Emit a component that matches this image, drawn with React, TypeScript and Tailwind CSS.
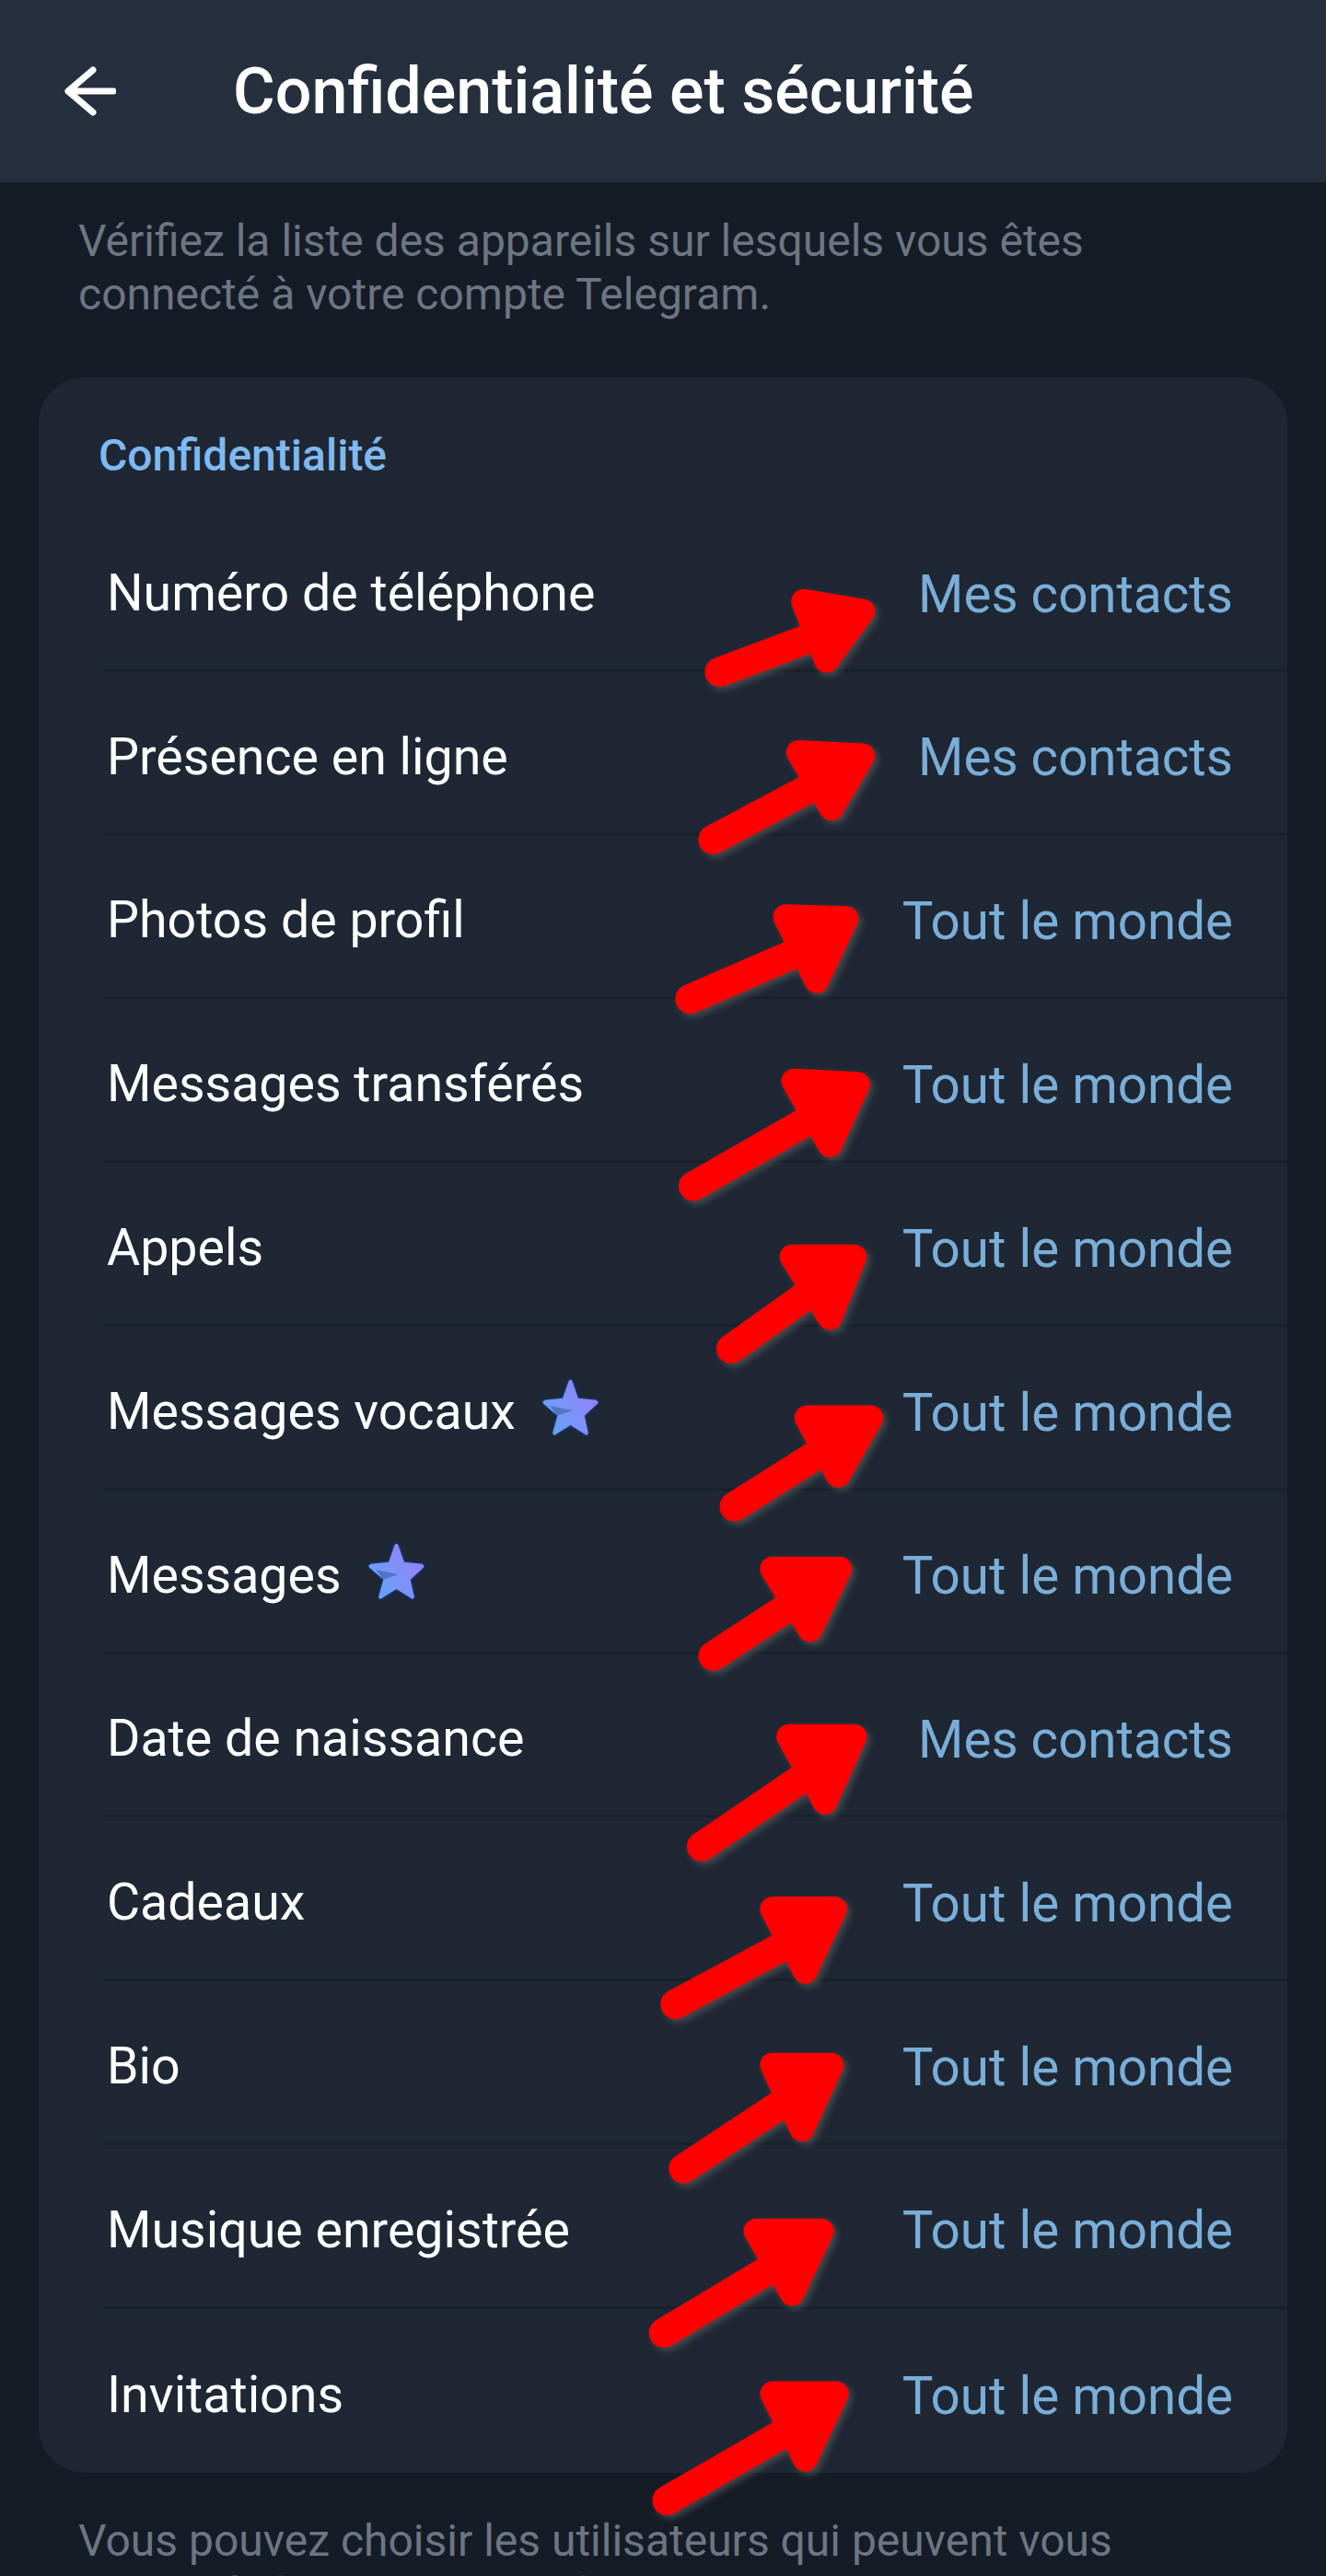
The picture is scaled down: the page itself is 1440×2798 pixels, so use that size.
import {ReactNode} from "react";

const rows = [
  {label: "Numéro de téléphone", value: "Mes contacts"},
  {label: "Présence en ligne", value: "Mes contacts"},
  {label: "Photos de profil", value: "Tout le monde"},
  {label: "Messages transférés", value: "Tout le monde"},
  {label: "Appels", value: "Tout le monde"},
  {label: "Messages vocaux", value: "Tout le monde", star: true},
  {label: "Messages", value: "Tout le monde", star: true},
  {label: "Date de naissance", value: "Mes contacts"},
  {label: "Cadeaux", value: "Tout le monde"},
  {label: "Bio", value: "Tout le monde"},
  {label: "Musique enregistrée", value: "Tout le monde"},
  {label: "Invitations", value: "Tout le monde"},
];

// tail, then the 3 corners of the head, in 807x1568 coords
const arrows = [
  [438, 409, 489, 366, 525, 372, 503, 402],
  [434, 511, 486, 458, 525, 460, 506, 492],
  [420, 608, 478, 558, 515, 559, 497, 597],
  [422, 722, 483, 658, 522, 660, 505, 697],
  [445, 821, 482, 765, 520, 765, 505, 802],
  [447, 917, 491, 863, 530, 863, 510, 898],
  [434, 1008, 470, 955, 511, 955, 493, 992],
  [427, 1124, 480, 1057, 520, 1057, 502, 1097],
  [411, 1220, 470, 1162, 508, 1162, 490, 1200],
  [416, 1320, 470, 1257, 506, 1257, 488, 1296],
  [404, 1420, 460, 1358, 500, 1358, 482, 1396],
  [406, 1522, 470, 1457, 509, 1457, 490, 1497],
];

const Star = ({id}: {id: string}) => (
  <svg viewBox="0 0 64 64" className="w-[65px] h-[64px] ml-[27px] -mt-[8px]">
    <defs>
      <linearGradient id={id} x1="0" y1="0.8" x2="1" y2="0.2">
        <stop offset="0" stopColor="#62a6f5" />
        <stop offset="1" stopColor="#9a7dfb" />
      </linearGradient>
    </defs>
    <path
      d="M32 1 Q34 1 35 4 L41 21 L60 23 Q64 25 62 28 L48 41 L52 59 Q52 63 48 62 L32 52 L16 62 Q12 63 12 59 L17 41 L2 28 Q0 25 4 23 L23 21 L29 4 Q30 1 32 1 Z"
      fill={`url(#${id})`}
      stroke="#1a3468"
      strokeWidth="1.5"
    />
    <path d="M10 30 L34 35 L17 41 Z" fill="#2f4f96" opacity="0.5" />
  </svg>
);

const Row = ({label, value, star, last}: {label: string; value: string; star?: boolean; last: boolean}): ReactNode => (
  <div className={`h-[177.8px] ml-[71px] pr-[59px] pt-[10px] flex items-center justify-between ${last ? "" : "border-b-[3px] border-[#18202a]"}`}>
    <div className="flex items-center pl-[3px] text-white text-[55.5px]">
      <span>{label}</span>
      {star && <Star id={`star-${label.length}`} />}
    </div>
    <span className="mt-[3px] text-[#7aaed8] text-[56.5px]">{value}</span>
  </div>
);

export default function App() {
  return (
    <div className="relative w-[1440px] h-[2798px] overflow-hidden bg-[#151c26] font-['Roboto',sans-serif]">
      <header className="h-[198px] bg-[#262f3d] flex items-center pl-[70px]">
        <svg viewBox="0 0 56 54" className="w-[56px] h-[54px]" fill="none" stroke="white" strokeWidth="7" strokeLinecap="round" strokeLinejoin="round">
          <path d="M4 27 H53 M31 4 L4 27 L31 50" />
        </svg>
        <h1 className="ml-[127px] text-white text-[70px] font-medium">Confidentialité et sécurité</h1>
      </header>
      <p className="px-[85px] pt-[35px] text-[#6d7682] text-[48px] leading-[58px]">
        Vérifiez la liste des appareils sur lesquels vous êtes connecté à votre compte Telegram.
      </p>
      <section className="mt-[61px] mx-[42px] rounded-[50px] bg-[#1e2733]">
        <h2 className="h-[142px] pl-[65px] pt-[58px] text-[#7fb9ef] text-[48px] leading-[54px] font-medium">Confidentialité</h2>
        {rows.map((r, i) => (
          <Row key={r.label} label={r.label} value={r.value} star={r.star} last={i === rows.length - 1} />
        ))}
      </section>
      <p className="px-[85px] pt-[45px] text-[#6d7682] text-[48px] leading-[58px]">
        Vous pouvez choisir les utilisateurs qui peuvent vous ajouter à des groupes et des canaux.
      </p>
      <svg viewBox="0 0 807 1568" className="absolute left-0 top-0 w-[1440px] h-[2798px] pointer-events-none">
        {arrows.map((a, i) => (
          <g key={i} stroke="#ff0000" strokeLinecap="round" strokeLinejoin="round" fill="#ff0000" style={{filter: "drop-shadow(2px 2px 2px rgba(90,90,90,0.7))"}}>
            <path d={`M${a[0]} ${a[1]} L${(a[4] + a[6]) / 2 - 12} ${(a[5] + a[7]) / 2 - 2}`} strokeWidth="18" fill="none" />
            <path d={`M${a[2]} ${a[3]} L${a[4]} ${a[5]} L${a[6]} ${a[7]} Z`} strokeWidth="15" />
          </g>
        ))}
      </svg>
    </div>
  );
}
